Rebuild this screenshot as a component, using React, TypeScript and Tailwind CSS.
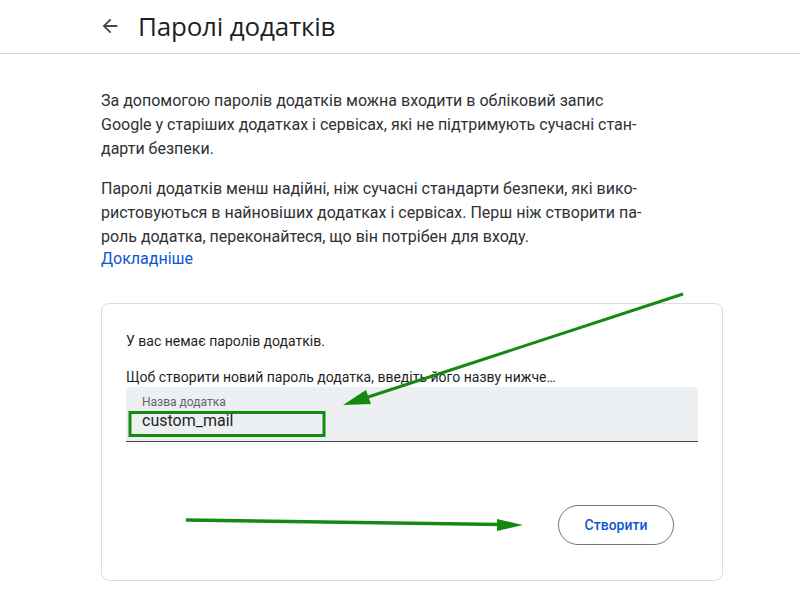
import React from "react";

// ── Annotation overlay: green arrows + highlight box drawn on top of the page
function Annotations() {
  return (
    <svg
      className="absolute left-0 top-0 pointer-events-none"
      width={800}
      height={600}
      viewBox="0 0 800 600"
    >
      <line x1={683} y1={294} x2={362} y2={399} stroke="#168a10" strokeWidth={3} />
      <polygon points="343,405 366,390 371,404" fill="#168a10" />
      <line x1={186} y1={520} x2={500} y2={524.5} stroke="#168a10" strokeWidth={3.5} />
      <polygon points="523,525 497,519 497,531" fill="#168a10" />
      <rect x={130} y={412.5} width={194} height={23} fill="none" stroke="#168a10" strokeWidth={3} />
    </svg>
  );
}

export default function App() {
  return (
    <div className="relative w-[800px] h-[600px] overflow-hidden bg-white text-[#1f1f1f] font-['Roboto',sans-serif]">
      {/* ── HEADER ───────────────────────────────────────── */}
      <div className="h-[54px] border-b border-[#d6d5da] flex items-center pl-[99px] pb-[2px]">
        <svg width="22" height="22" viewBox="0 0 24 24" className="text-[#444746]">
          <path d="M20 11H7.83l5.59-5.59L12 4l-8 8 8 8 1.41-1.41L7.83 13H20v-2z" fill="currentColor" />
        </svg>
        <h1 className="ml-[17px] text-[26px] leading-none text-[#1f1f1f] font-['Open_Sans',sans-serif] tracking-[-0.2px]">
          Паролі додатків
        </h1>
      </div>

      <div className="pl-[101px] w-[723px]">
        {/* ── INTRO TEXT ─────────────────────────────────── */}
        <div className="pt-[35px] text-[16px] leading-[24px] text-[#303134] whitespace-nowrap">
          <p>
            За допомогою паролів додатків можна входити в обліковий запис
            <br />
            Google у старіших додатках і сервісах, які не підтримують сучасні стан-
            <br />
            дарти безпеки.
          </p>
          <p className="mt-[16px]">
            Паролі додатків менш надійні, ніж сучасні стандарти безпеки, які вико-
            <br />
            ристовуються в найновіших додатках і сервісах. Перш ніж створити па-
            <br />
            роль додатка, переконайтеся, що він потрібен для входу.
          </p>
          <a className="block text-[#0b57d0] leading-[20px]">Докладніше</a>
        </div>

        {/* ── CARD ───────────────────────────────────────── */}
        <div className="mt-[34px] w-[622px] h-[278px] border border-[#dadce0] rounded-[8px] px-[24px] pt-[27px]">
          <p className="text-[14px] leading-[20px] text-[#1f1f1f]">У вас немає паролів додатків.</p>
          <p className="mt-[16px] text-[14px] leading-[20px] text-[#1f1f1f]">
            Щоб створити новий пароль додатка, введіть його назву нижче…
          </p>
          <div className="h-[55px] bg-[#edf0f2] border-b border-[#444746] rounded-t-[4px] px-[16px] pt-[7px]">
            <div className="text-[12px] leading-[16px] text-[#5f6368]">Назва додатка</div>
            <div className="text-[16px] leading-[22px] text-[#1f1f1f]">custom_mail</div>
          </div>
          <div className="flex justify-end pr-[24px] mt-[63px]">
            <button className="w-[116px] h-[40px] rounded-full border border-[#747775] text-[14px] font-medium text-[#0b57d0]">
              Створити
            </button>
          </div>
        </div>
      </div>

      <Annotations />
    </div>
  );
}
